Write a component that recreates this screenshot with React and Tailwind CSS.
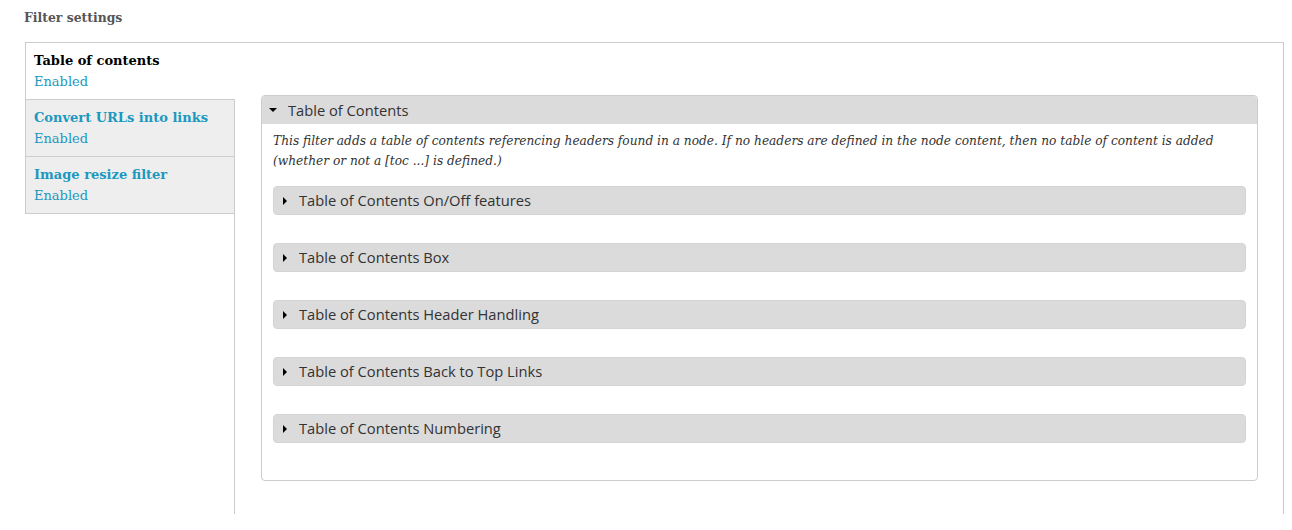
import React from 'react';

const serif = "font-['DejaVu_Serif',Georgia,serif]";
const sans = "font-['Open_Sans',Verdana,sans-serif]";

const tabs = [
  { title: 'Table of contents', status: 'Enabled', active: true },
  { title: 'Convert URLs into links', status: 'Enabled' },
  { title: 'Image resize filter', status: 'Enabled' },
];

const sections = [
  'Table of Contents On/Off features',
  'Table of Contents Box',
  'Table of Contents Header Handling',
  'Table of Contents Back to Top Links',
  'Table of Contents Numbering',
];

const ArrowRight = () => (
  <span className="w-0 h-0 border-y-[4px] border-y-transparent border-l-[4px] border-l-black mr-[12px]" />
);

const ArrowDown = () => (
  <span className="w-0 h-0 border-x-[4px] border-x-transparent border-t-[4px] border-t-black mr-[11px]" />
);

const App = () => {
  return (
    <div className={`w-[1292px] h-[530px] bg-white overflow-hidden ${serif}`}>
      <h2 className="pl-[24px] pt-[9px] text-[12.4px] leading-[18px] font-bold text-[#555]">Filter settings</h2>

      <div className="ml-[25px] mt-[15px] w-[1259px] flex items-start">
        {/* Vertical tab list */}
        <ul className="relative z-10 w-[210px] -mr-px border-t border-[#ccc]">
          {tabs.map((tab) => (
            <li
              key={tab.title}
              className={
                tab.active
                  ? 'bg-white border-l border-[#ccc] px-[8px] py-[7px] leading-[21px]'
                  : 'bg-[#eee] border-l border-r border-t last:border-b border-[#ccc] px-[8px] py-[7px] leading-[21px]'
              }
            >
              <div className={`text-[13px] font-bold ${tab.active ? 'text-black' : 'text-[#1b98c0]'}`}>{tab.title}</div>
              <div className="text-[13px] text-[#1b98c0]">{tab.status}</div>
            </li>
          ))}
        </ul>

        {/* Pane */}
        <div className="flex-1 h-[472px] border-t border-l border-r border-[#ccc] pl-[26px] pr-[25px] pt-[52px]">
          <fieldset className="border border-[#ccc] rounded-[4px] overflow-hidden">
            <div className={`h-[28px] bg-[#dbdbdb] flex items-center pl-[7px] text-[14.7px] text-[#333] ${sans}`}>
              <ArrowDown />
              Table of Contents
            </div>
            <div className="px-[11px] pt-[7px] pb-[37px]">
              <p className="italic text-[12.2px] leading-[20px] text-[#333] mb-[15px]">
                This filter adds a table of contents referencing headers found in a node. If no headers are defined in the node content, then no table of content is added (whether or not a [toc ...] is defined.)
              </p>
              <div className="flex flex-col gap-[28px]">
                {sections.map((s) => (
                  <div
                    key={s}
                    className={`h-[29px] bg-[#dbdbdb] border border-[#d4d4d4] rounded-[4px] flex items-center pl-[9px] text-[14.7px] text-[#333] ${sans}`}
                  >
                    <ArrowRight />
                    {s}
                  </div>
                ))}
              </div>
            </div>
          </fieldset>
        </div>
      </div>
    </div>
  );
};

export default App;
